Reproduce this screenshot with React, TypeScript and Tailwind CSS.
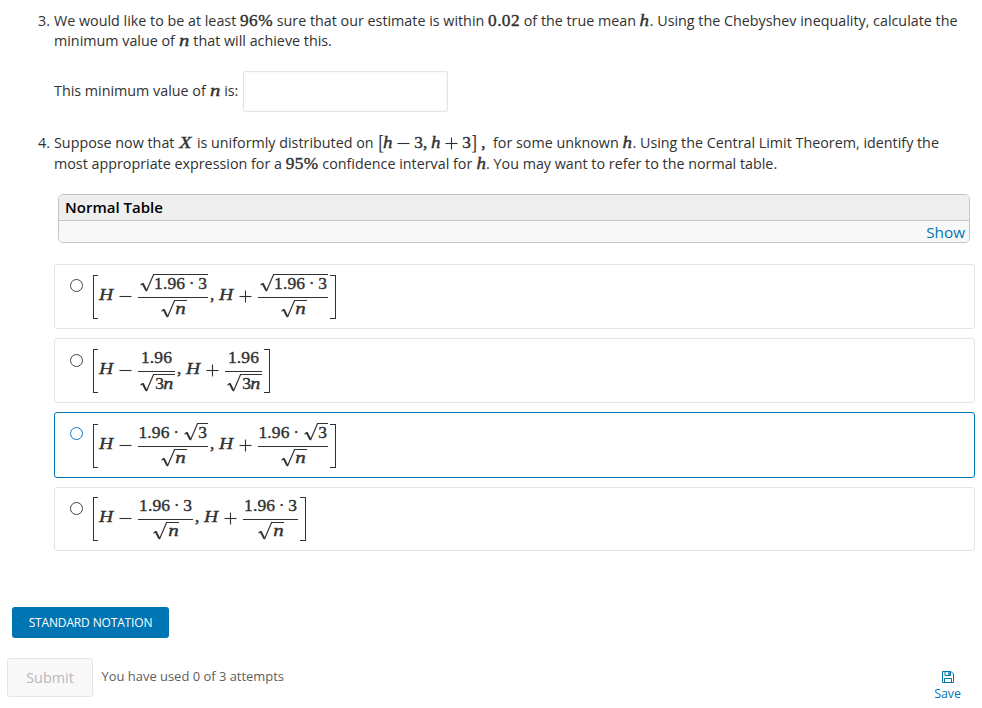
import type { ReactNode } from "react";

const serif = "font-['Liberation_Serif',serif] [-webkit-text-stroke:0.4px_currentColor]";

/* Inline mathematical term set inside running prose. */
function M({ children, className = "" }: { children: ReactNode; className?: string }) {
  return (
    <span className={`inline-block whitespace-pre text-center text-[17.3px] leading-[20px] ${serif} ${className}`}>
      {children}
    </span>
  );
}

function ProseN() {
  return (
    <M className="w-[11px] italic">
      <span className="inline-block scale-x-[1.25] text-[16.5px]">n</span>
    </M>
  );
}

function ProseH() {
  return (
    <M className="w-[10px] italic">
      <span className="inline-block scale-x-[1.1]">h</span>
    </M>
  );
}

function Radical() {
  return (
    <svg width="14" height="18" viewBox="0 0 14 18" className="shrink-0" fill="none" stroke="currentColor">
      <path d="M.6 11.2 3 9.3" strokeWidth="1.1" />
      <path d="M2.7 9.4 6.3 16.6" strokeWidth="2.1" />
      <path d="M6.4 17.3 13.6.5H14" strokeWidth="1.2" />
    </svg>
  );
}

function Sqrt({ children, className = "" }: { children: ReactNode; className?: string }) {
  return (
    <span className="flex h-[18px]">
      <Radical />
      <span className={`border-t border-current text-center ${className}`}>{children}</span>
    </span>
  );
}

function Frac({ num, den, className }: { num: ReactNode; den: ReactNode; className: string }) {
  return (
    <span className={`flex shrink-0 flex-col ${className}`}>
      <span className="flex h-[22px] justify-center leading-[16px]">{num}</span>
      <span className="h-px bg-current" />
      <span className="flex justify-center pt-[2px] pl-px">{den}</span>
    </span>
  );
}

function H() {
  return <span className="w-[15px] origin-left scale-x-[1.12] italic">H</span>;
}

function Sign({ plus = false, className = "mt-[15px] shrink-0" }: { plus?: boolean; className?: string }) {
  return (
    <svg width="13" height="13" viewBox="0 0 13 13" className={className} stroke="currentColor" strokeWidth="1.1">
      <path d="M.5 6.5H12.5" />
      {plus && <path d="M6.5.5V12.5" />}
    </svg>
  );
}

function Interval({ frac }: { frac: ReactNode }) {
  return (
    <span className={`flex h-[44px] whitespace-pre text-[17.5px] leading-[39px] text-[#313131] ${serif}`}>
      <span className="w-[5px] border-y border-l border-current" />
      <span className="flex w-[40px] gap-[5px] pl-px">
        <H />
        <Sign />
      </span>
      {frac}
      <span className="flex w-[50px] pl-[2px]">
        <span className="w-[9px]">,</span>
        <H />
        <span className="w-[5px]" />
        <Sign plus />
      </span>
      {frac}
      <span className="ml-[2px] w-[6px] border-y border-r border-current" />
    </span>
  );
}

function Dot() {
  return <span className="w-[13px] text-center">·</span>;
}

function Num() {
  return <span className="tracking-[0.15px]">1.96</span>;
}

const rootN = (
  <Sqrt className="w-[12px] leading-[15px] italic">
    <span className="inline-block scale-x-[1.2]">n</span>
  </Sqrt>
);

interface OptionProps {
  active?: boolean;
  className: string;
  radio?: string;
  math: string;
  frac: ReactNode;
}

function Option({ active = false, className, radio = "mt-[14px]", math, frac }: OptionProps) {
  return (
    <label className={`flex rounded-[3px] border pl-[15px] ${active ? "border-[#0075b4]" : "border-[#e4e4e4]"} ${className}`}>
      <span className={`size-[13px] rounded-full border ${radio} ${active ? "border-[#0078d4]" : "border-[#444]"}`} />
      <span className={`ml-[10px] ${math}`}>
        <Interval frac={frac} />
      </span>
    </label>
  );
}

export default function App() {
  return (
    <main className="flex h-[708px] w-[982px] flex-col overflow-hidden bg-white font-['Open_Sans',sans-serif] text-[14.32px] text-[#313131]">
      <div className="flex pl-[38px] pt-[10px] leading-[21px] whitespace-nowrap">
        <span className="w-[16px]">3.</span>
        <div>
          <div className="h-[20px]">
            We would like to be at least <M className="w-[33px] tracking-[0.4px]">96%</M> sure that our estimate is within{" "}
            <M className="w-[32px] tracking-[0.4px]">0.02</M> of the true mean <ProseH />. Using the Chebyshev inequality, calculate the
          </div>
          <div className="h-[22px]">
            minimum value of <ProseN /> that will achieve this.
          </div>
        </div>
      </div>

      <div className="mt-[19px] flex h-[41px] items-center pl-[54px]">
        <span className="mb-[2px] w-[189px] leading-[21px] whitespace-nowrap">
          This minimum value of <ProseN /> is:
        </span>
        <input className="h-[41px] w-[205px] rounded-[2px] border border-[#e4e4e4] shadow-[inset_0_0_3px_rgba(0,0,0,0.06)] outline-none" />
      </div>

      <div className="mt-[20px] flex pl-[38px] leading-[21px] whitespace-nowrap">
        <span className="w-[16px]">4.</span>
        <div>
          <div className="h-[21px]">
            Suppose now that{" "}
            <M className="w-[15px] italic">
              <span className="inline-block scale-x-[1.15]">X</span>
            </M>{" "}
            is uniformly distributed on{" "}
            <M className="ml-px w-[111px] text-left">
              <span className="inline-block w-[5px] scale-y-[1.25] [-webkit-text-stroke:0px]">[</span>
              <i className="inline-block w-[14px] origin-left scale-x-[1.1]">h</i>
              <Sign className="mr-[4px] inline-block align-[-2px]" />
              <span className="inline-block w-[17px]">3,</span>
              <i className="inline-block w-[14px] origin-left scale-x-[1.1]">h</i>
              <Sign plus className="mr-[4px] inline-block align-[-2px]" />
              <span className="inline-block w-[9px]">3</span>
              <span className="inline-block w-[10px] scale-y-[1.25] [-webkit-text-stroke:0px]">]</span>,
            </M>
            {" "}for some unknown <ProseH />. Using the Central Limit Theorem, identify the
          </div>
          <div className="h-[21px]">
            most appropriate expression for a <M className="w-[33px] tracking-[0.4px]">95%</M> confidence interval for{" "}
            <ProseH />. You may want to refer to the normal table.
          </div>
        </div>
      </div>

      <section className="mt-[20px] ml-[58px] flex h-[49px] w-[912px] flex-col overflow-hidden rounded-[5px] border border-[#c4c4c4] text-[15px]">
        <div className="h-[26px] border-b border-[#c4c4c4] bg-[#efefef] pl-[6px] leading-[25px] font-semibold text-black">Normal Table</div>
        <div className="flex-1 bg-[#f8f8f8] pr-[4px] text-right text-[15.3px] leading-[23px] text-[#0075b4]">Show</div>
      </section>

      <div className="mt-[21px] ml-[54px] flex w-[921px] flex-col gap-[9px]">
        <Option
          className="h-[65px]"
          math="mt-[10px]"
          frac={
            <Frac
              className="w-[70px]"
              num={<span className="-mt-px flex pl-px"><Sqrt className="flex w-[54px] justify-center"><Num /><Dot />3</Sqrt></span>}
              den={rootN}
            />
          }
        />
        <Option
          className="h-[65px]"
          radio="mt-[15px]"
          math="mt-[10px]"
          frac={
            <Frac
              className="w-[37px]"
              num={<Num />}
              den={<Sqrt className="w-[21px] leading-[17px]">3<i className="inline-block scale-x-[1.15]">n</i></Sqrt>}
            />
          }
        />
        <Option
          active
          className="h-[66px]"
          math="mt-[11px]"
          frac={
            <Frac
              className="w-[70px]"
              num={<><Num /><Dot /><span className="-mt-px pl-px"><Sqrt className="w-[10px] leading-[17px]">3</Sqrt></span></>}
              den={rootN}
            />
          }
        />
        <Option
          className="h-[64px]"
          math="mt-[9px]"
          frac={<Frac className="w-[55px]" num={<><Num /><Dot />3</>} den={rootN} />}
        />
      </div>

      <button className="mt-[56px] ml-[12px] h-[31px] w-[157px] rounded-[3px] bg-[#0075b4] text-[12px] tracking-[-0.15px] text-white">STANDARD NOTATION</button>

      <div className="mt-[20px] flex pl-[7px]">
        <button className="h-[39px] w-[86px] rounded-[3px] border border-[#e4e4e4] bg-[#f8f8f8] text-[14.4px] text-[#b8b8b8]">Submit</button>
        <span className="ml-[8.5px] text-[12.95px] leading-[37px] text-[#5e5e5e]">You have used 0 of 3 attempts</span>
        <button className="mt-[13px] mr-[21px] ml-auto flex h-[31px] flex-col items-center text-[12.4px] leading-[17px] text-[#0075b4]">
          <svg width="12" height="12" viewBox="0 0 12 12" fill="none" stroke="currentColor" className="mb-[2px] shrink-0">
            <path d="M.5.5H9L11.5 3V11.5H.5Z" />
            <path d="M3 .5V4.5H8.5V.5M2.5 11.5V7.5H9.5V11.5" />
            <path d="M7 1V4" strokeWidth="1.4" />
          </svg>
          Save
        </button>
      </div>
    </main>
  );
}
